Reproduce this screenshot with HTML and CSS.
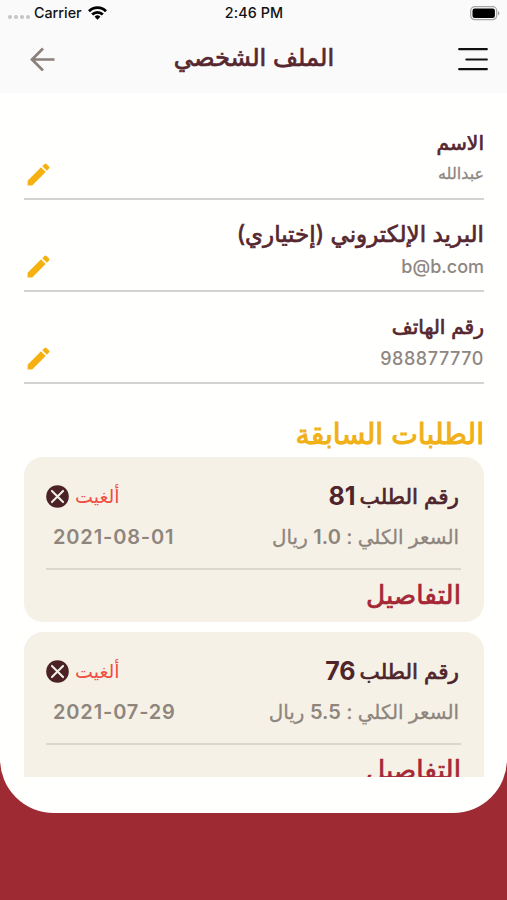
FILE: index.html
```html
<!DOCTYPE html>
<html lang="ar" dir="rtl">
<head>
  <meta charset="UTF-8">
  <meta name="viewport" content="width=device-width, initial-scale=1.0">
  <title>الملف الشخصي</title>
  <link rel="stylesheet" href="styles.css">
</head>
<body>
  <svg width="0" height="0" class="icon-defs">
    <symbol id="pencil" viewBox="0 0 24 24">
      <path d="M3 17.2V21h3.8L17.9 9.9l-3.8-3.8L3 17.2zM20.71 7.04a1.2 1.2 0 0 0 0-1.6l-2.15-2.15a1.2 1.2 0 0 0-1.6 0l-1.8 1.8 3.75 3.75 1.8-1.8z"/>
    </symbol>
    <symbol id="cancel" viewBox="0 0 24 24">
      <circle cx="12" cy="12" r="11.8" fill="#4b2327"/>
      <path d="M6.2 6.2l11.6 11.6M17.8 6.2L6.2 17.8" stroke="#f6f1e6" stroke-width="2.1" stroke-linecap="round"/>
    </symbol>
  </svg>

  <div class="screen">
    <header>
      <div class="status-bar" dir="ltr">
        <div class="carrier">
          <span class="dots"><i></i><i></i><i></i><i></i></span>
          <span>Carrier</span>
          <svg class="wifi" viewBox="0 0 19 14" width="19" height="14">
            <g fill="none" stroke="#000" stroke-width="2.8">
              <path d="M1 5.2a12 12 0 0 1 17 0"/>
              <path d="M4.2 8.6a7.5 7.5 0 0 1 10.6 0"/>
            </g>
            <path d="M9.5 13.8l-2.9-3a4.1 4.1 0 0 1 5.8 0z"/>
          </svg>
        </div>
        <span class="time">2:46 PM</span>
        <div class="battery-wrap">
          <svg viewBox="0 0 30 15" width="30" height="15">
            <rect x=".7" y=".7" width="26" height="13" rx="4" fill="none" stroke="#a5a5a5" stroke-width="1.2"/>
            <rect x="2.5" y="2.5" width="22.4" height="9.4" rx="2.2"/>
            <path d="M28 5v4.6q1.4-.7 1.4-2.3T28 5z" fill="#a5a5a5"/>
          </svg>
        </div>
      </div>
      <div class="title-bar">
        <svg class="menu" viewBox="0 0 30 24" width="30" height="24">
          <path d="M1.2 2.2h27.6M8.4 12.5h20.4M1.2 22.2h27.6" stroke="#111" stroke-width="2.2" stroke-linecap="round"/>
        </svg>
        <h1>الملف الشخصي</h1>
        <svg class="back" viewBox="0 0 25 24" width="25" height="24">
          <path d="M24.5 12.5H2M13 1.5l-11 11 11 11" fill="none" stroke="#8b807b" stroke-width="2.7"/>
        </svg>
      </div>
    </header>

    <main>
      <div class="field">
        <div class="field-text">
          <h2>الاسم</h2>
          <p class="name">عبدالله</p>
        </div>
        <svg class="edit"><use href="#pencil"/></svg>
      </div>
      <div class="field">
        <div class="field-text">
          <h2 class="email-label">البريد الإلكتروني (إختياري)</h2>
          <p dir="ltr">b@b.com</p>
        </div>
        <svg class="edit"><use href="#pencil"/></svg>
      </div>
      <div class="field">
        <div class="field-text">
          <h2>رقم الهاتف</h2>
          <p class="phone">988877770</p>
        </div>
        <svg class="edit"><use href="#pencil"/></svg>
      </div>

      <h2 class="orders-title">الطلبات السابقة</h2>

      <div class="orders">
        <div class="order">
          <div class="order-head">
            <h3><span>رقم الطلب</span><b>81</b></h3>
            <div class="status"><span>ألغيت</span><svg><use href="#cancel"/></svg></div>
          </div>
          <div class="order-info">
            <p>السعر الكلي : <b>1.0</b> ريال</p>
            <time dir="ltr">2021-08-01</time>
          </div>
          <div class="details">التفاصيل</div>
        </div>
        <div class="order">
          <div class="order-head">
            <h3><span>رقم الطلب</span><b>76</b></h3>
            <div class="status"><span>ألغيت</span><svg><use href="#cancel"/></svg></div>
          </div>
          <div class="order-info">
            <p>السعر الكلي : <b>5.5</b> ريال</p>
            <time dir="ltr">2021-07-29</time>
          </div>
          <div class="details">التفاصيل</div>
        </div>
      </div>
    </main>
  </div>
</body>
</html>
```
FILE: styles.css
```css
* {
  box-sizing: border-box;
}
body {
  margin: 0;
  height: 900px;
  overflow: hidden;
  background-color: #9e2a33;
  font-family: Inter, "DejaVu Sans", sans-serif;
}
h1, h2, h3, p {
  margin: 0;
  white-space: nowrap;
}
h1, h2, h3, .details {
  font-weight: 400;
  -webkit-text-stroke: 0.7px currentColor;
}
.icon-defs {
  display: block;
}
.screen {
  height: 813px;
  background-color: #fffffe;
  border-radius: 0 0 54px 54px;
  overflow: hidden;
}
header {
  height: 93px;
  background-color: #fafafa;
}
.status-bar {
  display: grid;
  grid-template-columns: 1fr auto 1fr;
  align-items: center;
  height: 26px;
  padding: 0 7px 0 8px;
  font-size: 14.3px;
  font-weight: 500;
  color: #111;
}
.carrier {
  display: flex;
  align-items: center;
}
.dots {
  display: flex;
  gap: 2px;
  margin: 8px 4px 0 0;
}
.dots i {
  width: 4px;
  height: 4px;
  border-radius: 50%;
  background-color: #c4c4c4;
}
.wifi {
  margin-left: 6px;
}
.time {
  letter-spacing: 0.1px;
}
.carrier,
.time {
  margin-top: -1px;
}
.battery-wrap {
  display: flex;
  justify-content: flex-end;
}
.title-bar {
  display: grid;
  grid-template-columns: 1fr auto 1fr;
  align-items: center;
  height: 66px;
  padding: 0 19px 0 30px;
}
.title-bar h1 {
  padding-right: 10px;
  font-size: 24.2px;
  line-height: 30px;
  margin-top: -2px;
  color: #56272e;
}
.back {
  justify-self: end;
}
main {
  padding: 15px 23px 0 24px;
}
.field {
  display: flex;
  justify-content: space-between;
  align-items: flex-end;
  height: 92px;
  border-bottom: 2px solid #d3d3d1;
}
.field-text {
  height: 71px;
}
.field h2 {
  font-size: 20.2px;
  line-height: 32px;
  height: 33px;
  color: #56272e;
}
.field .email-label {
  font-size: 23px;
  line-height: 30px;
}
.field p {
  height: 28px;
  font-size: 18px;
  line-height: 29px;
  font-weight: 550;
  text-align: right;
  color: #8e8681;
}
.field .name {
  font-size: 16px;
  font-weight: 400;
  line-height: 27px;
  -webkit-text-stroke: 0.3px currentColor;
}
.field .phone {
  letter-spacing: 0.55px;
}
.edit {
  width: 29px;
  height: 29px;
  margin: 0 0 9px;
  fill: #f4b110;
}
.orders-title {
  height: 73px;
  padding-top: 31px;
  font-size: 28.3px;
  line-height: 38px;
  color: #f0b016;
  -webkit-text-stroke-width: 1px;
}
.orders {
  display: flex;
  flex-direction: column;
  gap: 10px;
  height: 320px;
  overflow: hidden;
}
.order {
  flex: none;
  height: 165px;
  padding: 19px 23px 0 22px;
  border-radius: 19px;
  background-color: #f6f1e6;
}
.order-head,
.order-info {
  display: flex;
  justify-content: space-between;
  align-items: center;
  height: 40px;
}
.order-head h3 {
  display: flex;
  align-items: center;
  gap: 4px;
  padding-right: 2px;
  font-size: 21.5px;
  color: #4f252b;
}
.order-head b {
  font-size: 25px;
  font-weight: 650;
  -webkit-text-stroke: 0;
}
.status {
  display: flex;
  align-items: center;
  gap: 6px;
  font-size: 19px;
  color: #ef4e42;
}
.status svg {
  width: 23px;
  height: 23px;
}
.order-info {
  padding-top: 1px;
}
.order-info p {
  padding-right: 2px;
  font-size: 19.9px;
  color: #8e857d;
  -webkit-text-stroke: 0.3px currentColor;
}
.order-info b {
  font-size: 20px;
  font-weight: 600;
  -webkit-text-stroke: 0;
}
.order-info time {
  padding-left: 7px;
  font-size: 20px;
  font-weight: 600;
  letter-spacing: 0.85px;
  color: #8e857d;
}
.details {
  margin-top: 12px;
  border-top: 2px solid #dbd7cd;
  font-size: 26.4px;
  line-height: 48px;
  color: #a52736;
}
```
